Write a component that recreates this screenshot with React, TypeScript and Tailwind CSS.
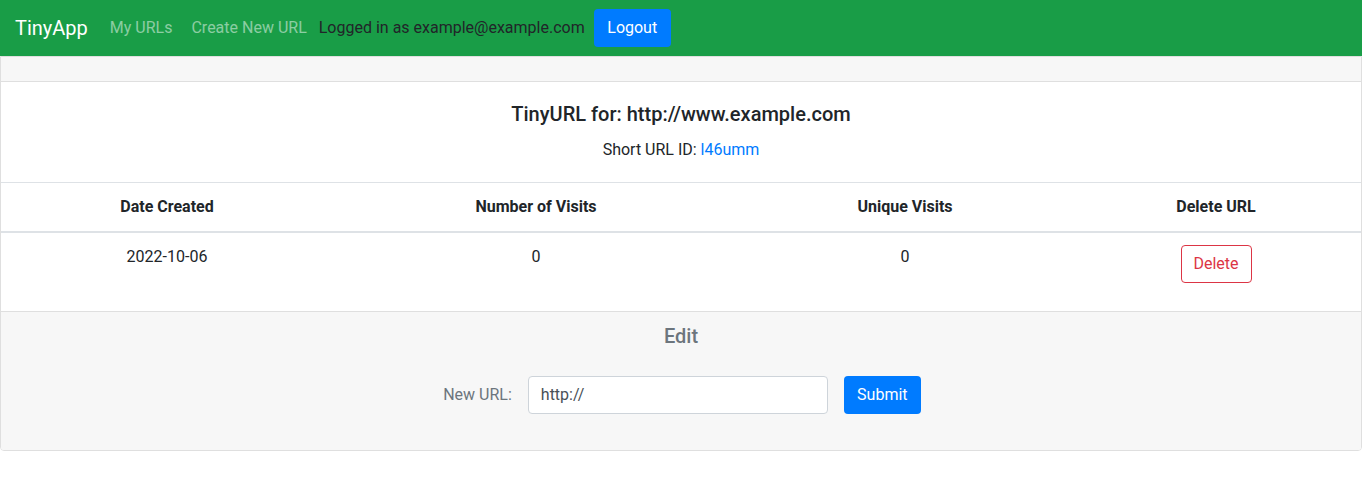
export default function App() {
  const font = { fontFamily: 'Roboto, "Helvetica Neue", Arial, sans-serif' };
  return (
    <div style={font} className="text-[#212529] text-[16px] leading-[24px] bg-white">
      <nav className="h-[56px] bg-[#199d47] flex items-center pl-[15px] pr-[16px]">
        <span className="text-white text-[20px] leading-[30px] mr-[14px]">TinyApp</span>
        <a className="px-[8px] text-white/50">My URLs</a>
        <a className="ml-[3px] px-[8px] text-white/50">Create New URL</a>
        <span className="ml-[4px]">Logged in as example@example.com</span>
        <button className="ml-[9px] h-[38px] w-[77px] rounded-[4px] bg-[#007bff] text-white">Logout</button>
      </nav>
      <div className="border border-[#dfdfdf] rounded-b-[4px] overflow-hidden">
        <div className="h-[25px] bg-[#f7f7f7] border-b border-[#dfdfdf]" />
        <div className="pt-[20px] pb-[20px] text-center">
          <h5 className="text-[20px] leading-[24px] font-medium mb-[12px]">TinyURL for: http://www.example.com</h5>
          <p>
            Short URL ID: <a className="text-[#007bff]">l46umm</a>
          </p>
        </div>
        <div className="border-t border-[#dee2e6]">
          <div className="grid grid-cols-[332px_406px_332px_1fr] border-b-2 border-[#dee2e6] font-bold text-center">
            <div className="py-[12px]">Date Created</div>
            <div className="py-[12px]">Number of Visits</div>
            <div className="py-[12px]">Unique Visits</div>
            <div className="py-[12px]">Delete URL</div>
          </div>
          <div className="grid grid-cols-[332px_406px_332px_1fr] text-center h-[78px]">
            <div className="pt-[12px]">2022-10-06</div>
            <div className="pt-[12px]">0</div>
            <div className="pt-[12px]">0</div>
            <div className="pt-[12px] flex justify-center">
              <button className="h-[38px] w-[71px] rounded-[4px] border border-[#dc3545] text-[#dc3545]">Delete</button>
            </div>
          </div>
        </div>
        <div className="bg-[#f7f7f7] border-t border-[#dfdfdf] h-[139px] pt-[12px] flex flex-col items-center">
          <div className="text-[20px] leading-[24px] font-medium text-[#6c757d]">Edit</div>
          <div className="mt-[28px] ml-[2px] flex items-center text-[#6c757d]">
            <label className="mr-[16px]">New URL:</label>
            <div className="w-[300px] h-[38px] border border-[#ced4da] rounded-[4px] bg-white px-[12px] flex items-center text-[#495057]">http://</div>
            <button className="ml-[16px] h-[38px] w-[77px] rounded-[4px] bg-[#007bff] text-white">Submit</button>
          </div>
        </div>
      </div>
    </div>
  );
}
